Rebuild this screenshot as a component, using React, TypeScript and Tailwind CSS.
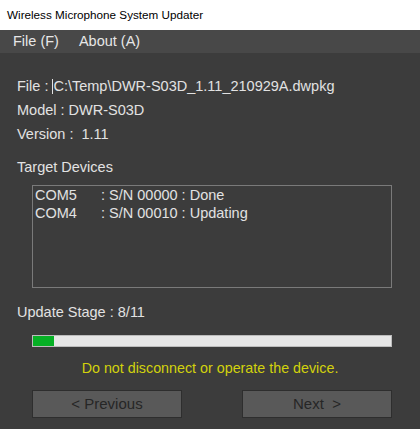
import React from 'react';

const devices = [
  { port: 'COM5', sn: '00000', status: 'Done' },
  { port: 'COM4', sn: '00010', status: 'Updating' },
];

export default function App() {
  const stage = 8;
  const total = 11;

  return (
    <div className="w-[420px] h-[429px] flex flex-col bg-[#3c3c3c] overflow-hidden" style={{ fontFamily: '"Liberation Sans", Arial, sans-serif' }}>
      {/* window title */}
      <div className="h-[30px] shrink-0 bg-white flex items-center pl-[7px] text-[11.7px] text-black">
        Wireless Microphone System Updater
      </div>

      {/* menu */}
      <div className="h-[23px] shrink-0 bg-[#484848] flex items-center text-[14.5px] text-[#e6e6e6]">
        <span className="ml-[13px]">File (F)</span>
        <span className="ml-[20px]">About (A)</span>
      </div>

      <div className="flex flex-col pt-[21px] text-[14.5px] text-[#e2e2e2]">
        <div className="h-6 leading-6 pl-[17px] flex items-center">
          <span>File :&nbsp;</span>
          <span className="w-px h-[15px] bg-[#e2e2e2]" />
          <span>C:\Temp\DWR-S03D_1.11_210929A.dwpkg</span>
        </div>
        <div className="h-6 leading-6 pl-[17px]">Model : DWR-S03D</div>
        <div className="h-6 leading-6 pl-[17px] whitespace-pre">Version :  1.11</div>

        <div className="h-6 leading-6 pl-[17px] mt-[9px]">Target Devices</div>

        <div className="ml-[32px] mt-[6px] w-[360px] h-[103px] border border-[#7a7a7a] pl-[2px] leading-[18px]">
          {devices.map((d) => (
            <div key={d.port} className="flex">
              <span className="w-[66px]">{d.port}</span>
              <span>: S/N {d.sn} : {d.status}</span>
            </div>
          ))}
        </div>

        <div className="h-6 leading-6 pl-[17px] mt-[12px]">
          Update Stage : {stage}/{total}
        </div>

        <div className="ml-[32px] mt-[11px] w-[360px] h-[12px] bg-[#e6e6e6] border border-[#bcbcbc] flex">
          <div className="w-[21px] h-full bg-[#06b025]" />
        </div>

        <div className="h-6 leading-6 mt-[9px] text-center text-[14.3px] text-[#d2d20c]">
          Do not disconnect or operate the device.
        </div>

        <div className="mt-[10px] ml-[32px] w-[360px] flex justify-between">
          <button className="w-[150px] h-[28px] bg-[#595959] border border-[#2e2e2e] text-[15px] text-[#262626] flex items-center justify-center">
            &lt; Previous
          </button>
          <button className="w-[150px] h-[28px] bg-[#595959] border border-[#2e2e2e] text-[15px] text-[#262626] flex items-center justify-center whitespace-pre">
            Next  &gt;
          </button>
        </div>
      </div>
    </div>
  );
}
